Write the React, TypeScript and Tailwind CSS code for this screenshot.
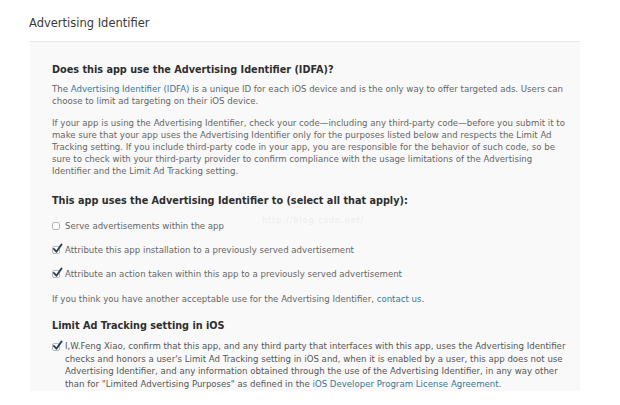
import React from 'react';

const Check = ({ checked }: { checked: boolean }) => (
  <span className="relative inline-block w-[8px] h-[8px] shrink-0 rounded-[2px] border border-[#b9b9b9] bg-white">
    {checked && (
      <svg viewBox="0 0 12 12" className="absolute left-[-1px] top-[-4px] w-[11px] h-[11px]">
        <path d="M2 6.5 L4.8 9.5 L10.5 1.5" fill="none" stroke="#2d3f55" strokeWidth="2" strokeLinecap="round" strokeLinejoin="round" />
      </svg>
    )}
  </span>
);

const Link = ({ children }: { children: React.ReactNode }) => (
  <span className="text-[#35789a]">{children}</span>
);

const Option = ({ checked, label }: { checked: boolean; label: string }) => (
  <div className="flex items-center gap-[5px] h-[12px]">
    <Check checked={checked} />
    <span>{label}</span>
  </div>
);

export default function App() {
  return (
    <div className="w-[620px] h-[405px] overflow-hidden bg-white font-['DejaVu_Sans',sans-serif] relative">
      <div className="pl-[29px] pt-[16px] text-[11.5px] leading-[14px] text-[#3a3a3a]">Advertising Identifier</div>

      <div className="ml-[30px] mt-[11px] w-[550px] h-[350px] bg-[#f9f9f9] border-t border-[#e7e7e7] px-[22px] pt-[21px] text-[8.6px] leading-[12px] text-[#666] whitespace-nowrap">
        <h2 className="text-[9.7px] leading-[14px] font-bold text-[#2e2e2e]">Does this app use the Advertising Identifier (IDFA)?</h2>

        <p className="mt-[6px]">
          The <Link>Advertising Identifier (IDFA)</Link> is a unique ID for each iOS device and is the only way to offer targeted ads. Users can
          <br />
          choose to limit ad targeting on their iOS device.
        </p>

        <p className="mt-[10px]">
          If your app is using the Advertising Identifier, check your code—including any third-party code—before you submit it to
          <br />
          make sure that your app uses the Advertising Identifier only for the purposes listed below and respects the Limit Ad
          <br />
          Tracking setting. If you include third-party code in your app, you are responsible for the behavior of such code, so be
          <br />
          sure to check with your third-party provider to confirm compliance with the usage limitations of the Advertising
          <br />
          Identifier and the Limit Ad Tracking setting.
        </p>

        <h2 className="mt-[17px] text-[9.7px] leading-[14px] font-bold text-[#2e2e2e]">This app uses the Advertising Identifier to (select all that apply):</h2>

        <div className="mt-[12px] flex flex-col gap-[12px]">
          <Option checked={false} label="Serve advertisements within the app" />
          <Option checked={true} label="Attribute this app installation to a previously served advertisement" />
          <Option checked={true} label="Attribute an action taken within this app to a previously served advertisement" />
        </div>

        <p className="mt-[13px]">
          If you think you have another acceptable use for the Advertising Identifier, <Link>contact us</Link>.
        </p>

        <h2 className="mt-[14px] text-[9.7px] leading-[14px] font-bold text-[#2e2e2e]">Limit Ad Tracking setting in iOS</h2>

        <div className="mt-[7px] flex gap-[5px] text-[#555]">
          <div className="pt-[2px]">
            <Check checked={true} />
          </div>
          <p className="leading-[12.5px]">
            I,W.Feng Xiao, confirm that this app, and any third party that interfaces with this app, uses the Advertising Identifier
            <br />
            checks and honors a user's Limit Ad Tracking setting in iOS and, when it is enabled by a user, this app does not use
            <br />
            Advertising Identifier, and any information obtained through the use of the Advertising Identifier, in any way other
            <br />
            than for "Limited Advertising Purposes" as defined in the <Link>iOS Developer Program License Agreement</Link>.
          </p>
        </div>
      </div>

      <div className="absolute left-[262px] top-[215px] text-[8px] text-[#ececec] tracking-[1px]">http://blog.csdn.net/</div>
    </div>
  );
}
